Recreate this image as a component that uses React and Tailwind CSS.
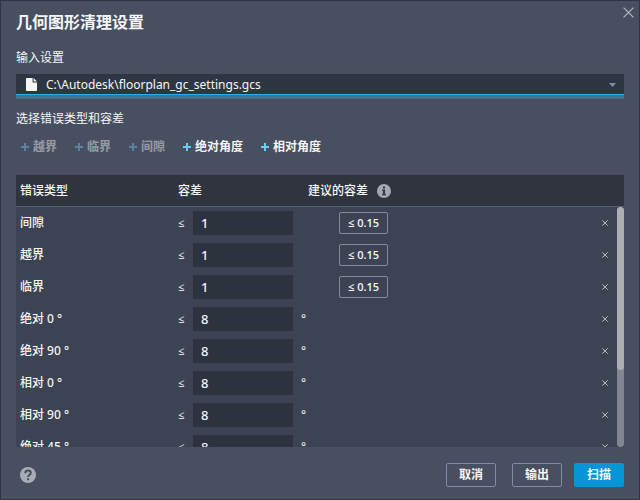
import React from "react";

const addButtons = [
  { label: "越界", disabled: true },
  { label: "临界", disabled: true },
  { label: "间隙", disabled: true },
  { label: "绝对角度", disabled: false },
  { label: "相对角度", disabled: false },
];

const rows = [
  { name: "间隙", value: "1", suggested: "0.15" },
  { name: "越界", value: "1", suggested: "0.15" },
  { name: "临界", value: "1", suggested: "0.15" },
  { name: "绝对 0 °", value: "8", unit: "°" },
  { name: "绝对 90 °", value: "8", unit: "°" },
  { name: "相对 0 °", value: "8", unit: "°" },
  { name: "相对 90 °", value: "8", unit: "°" },
  { name: "绝对 45 °", value: "8", unit: "°" },
];

const CrossIcon = ({ className }) => (
  <svg viewBox="0 0 10 10" className={className} fill="none" stroke="currentColor" aria-hidden="true">
    <path d="M0.5 0.5 9.5 9.5M9.5 0.5 0.5 9.5" />
  </svg>
);

const PlusIcon = () => (
  <svg viewBox="0 0 8 8" className="size-2 text-[#6ac9f7]" fill="none" stroke="currentColor" strokeWidth="2" aria-hidden="true">
    <path d="M4 0v8M0 4h8" />
  </svg>
);

const FileIcon = () => (
  <svg viewBox="0 0 11 13" className="w-[11px] h-[13px]" aria-hidden="true">
    <path d="M0.8 0H6.6V4.5H11V12.2Q11 13 10.2 13H0.8Q0 13 0 12.2V0.8Q0 0 0.8 0Z" fill="#f5f5f5" />
    <path d="M7.6 0 11 3.5H7.6Z" fill="#f5f5f5" />
  </svg>
);

const InfoIcon = () => (
  <svg viewBox="0 0 14 14" className="size-3.5" aria-hidden="true">
    <circle cx="7" cy="7" r="7" fill="#a4a8b2" />
    <path d="M6 2.6H8V4.4H6ZM5 5.6H8V10H9V11.2H5V10H6V6.8H5Z" fill="#2f343f" />
  </svg>
);

const HelpIcon = () => (
  <svg viewBox="0 0 16 16" className="size-4" aria-hidden="true">
    <circle cx="8" cy="8" r="8" fill="#a8acb6" />
    <path d="M5.3 6.3C5.3 4.5 6.4 3.6 8 3.6S10.8 4.5 10.8 6C10.8 7.8 8.1 7.8 8.1 10" fill="none" stroke="#474f60" strokeWidth="2" />
    <path d="M7.1 11.2H9.1V13.2H7.1Z" fill="#474f60" />
  </svg>
);

const App = () => {
  return (
    <main className="flex h-screen flex-col border border-[#2e3643] bg-[#474f60] px-[15px] pb-3 font-['Noto_Sans','Noto_Sans_CJK_SC',sans-serif] text-xs text-[#f5f5f5]">
      <header className="flex justify-between">
        <h1 className="mt-[9px] text-base leading-6 font-bold">几何图形清理设置</h1>
        <button type="button" aria-label="关闭" className="-mr-3.5 flex size-5 items-center justify-center pt-0.5 text-[#b6bac3]">
          <CrossIcon className="size-[11px]" />
        </button>
      </header>

      <label htmlFor="settings" className="mt-4 leading-4">
        输入设置
      </label>
      <div className="relative mt-2">
        <select
          id="settings"
          className="block h-[25px] w-full appearance-none border-b-4 border-[#45728c] bg-[#2f3643] pl-[30px] text-xs shadow-[inset_0_-1px_0_#35a8e6] outline-none"
        >
          <option>C:\Autodesk\floorplan_gc_settings.gcs</option>
        </select>
        <div className="pointer-events-none absolute inset-x-0 top-0 flex h-[21px] items-center justify-between pr-2 pl-2.5">
          <FileIcon />
          <svg viewBox="0 0 7 4" className="w-[7px] h-1" aria-hidden="true">
            <path d="M0 0H7L3.5 4Z" fill="#7c8fa5" />
          </svg>
        </div>
      </div>

      <h2 className="mt-3 leading-4">选择错误类型和容差</h2>
      <div className="mt-3 flex gap-[18px] pl-[5px]">
        {addButtons.map((button) => (
          <button
            key={button.label}
            type="button"
            disabled={button.disabled}
            className="flex items-center gap-1 leading-4 font-bold disabled:opacity-45"
          >
            <PlusIcon />
            {button.label}
          </button>
        ))}
      </div>

      <div className="relative mt-5 min-h-0 flex-1">
        <div className="h-full overflow-y-auto bg-[#3c4453] [scrollbar-width:none]">
          <table className="w-full table-fixed border-separate border-spacing-0 text-left">
            <thead className="sticky top-0 z-10 bg-[#2f343f]">
              <tr className="h-8 *:border-b *:border-[#566072] *:p-0 *:font-medium">
                <th className="w-[162px]">
                  <span className="pl-1">错误类型</span>
                </th>
                <th className="w-[130px]">容差</th>
                <th>
                  <span className="flex items-center gap-[9px]">
                    建议的容差
                    <InfoIcon />
                  </span>
                </th>
                <th className="w-8" aria-label="删除"></th>
              </tr>
            </thead>
            <tbody>
              {rows.map((row) => (
                <tr key={row.name} className="h-8 *:p-0">
                  <td>
                    <span className="pl-1 font-medium">{row.name}</span>
                  </td>
                  <td>
                    <div className="flex items-center">
                      <span className="w-[15px] font-['Open_Sans',sans-serif] text-[11px] font-medium">≤</span>
                      <input
                        type="text"
                        defaultValue={row.value}
                        aria-label={`${row.name} 容差`}
                        className="h-6 w-[100px] bg-[#2d323f] px-2 text-[13px] font-medium outline-none"
                      />
                      <span className="pl-2">{row.unit}</span>
                    </div>
                  </td>
                  <td>
                    {row.suggested && (
                      <button
                        type="button"
                        className="ml-[31px] block h-[22px] w-[49px] rounded-xs border border-[#7f8da2] font-['Open_Sans',sans-serif] text-[11px] leading-4 font-semibold"
                      >
                        ≤ {row.suggested}
                      </button>
                    )}
                  </td>
                  <td>
                    <button type="button" aria-label={`删除 ${row.name}`} className="ml-[9px] block p-px text-[#c3c7cf]">
                      <CrossIcon className="size-1.5 stroke-[1.5] overflow-visible" />
                    </button>
                  </td>
                </tr>
              ))}
            </tbody>
          </table>
        </div>
        <div className="absolute top-8 right-0 bottom-0 z-20 w-[7px] rounded-full bg-[#828690]">
          <div className="h-[68%] rounded-full bg-[#acaeb2]"></div>
        </div>
      </div>

      <footer className="mt-4 flex items-center">
        <button type="button" aria-label="帮助" className="mr-auto ml-1">
          <HelpIcon />
        </button>
        <button type="button" className="mr-4 h-6 w-[50px] rounded-xs border border-[#7f8da2] leading-4 font-bold">
          取消
        </button>
        <button type="button" className="mr-3 h-6 w-[50px] rounded-xs border border-[#7f8da2] leading-4 font-bold">
          输出
        </button>
        <button type="button" className="h-6 w-[50px] rounded-xs bg-[#0696d7] leading-4 font-bold">
          扫描
        </button>
      </footer>
    </main>
  );
};

export default App;
